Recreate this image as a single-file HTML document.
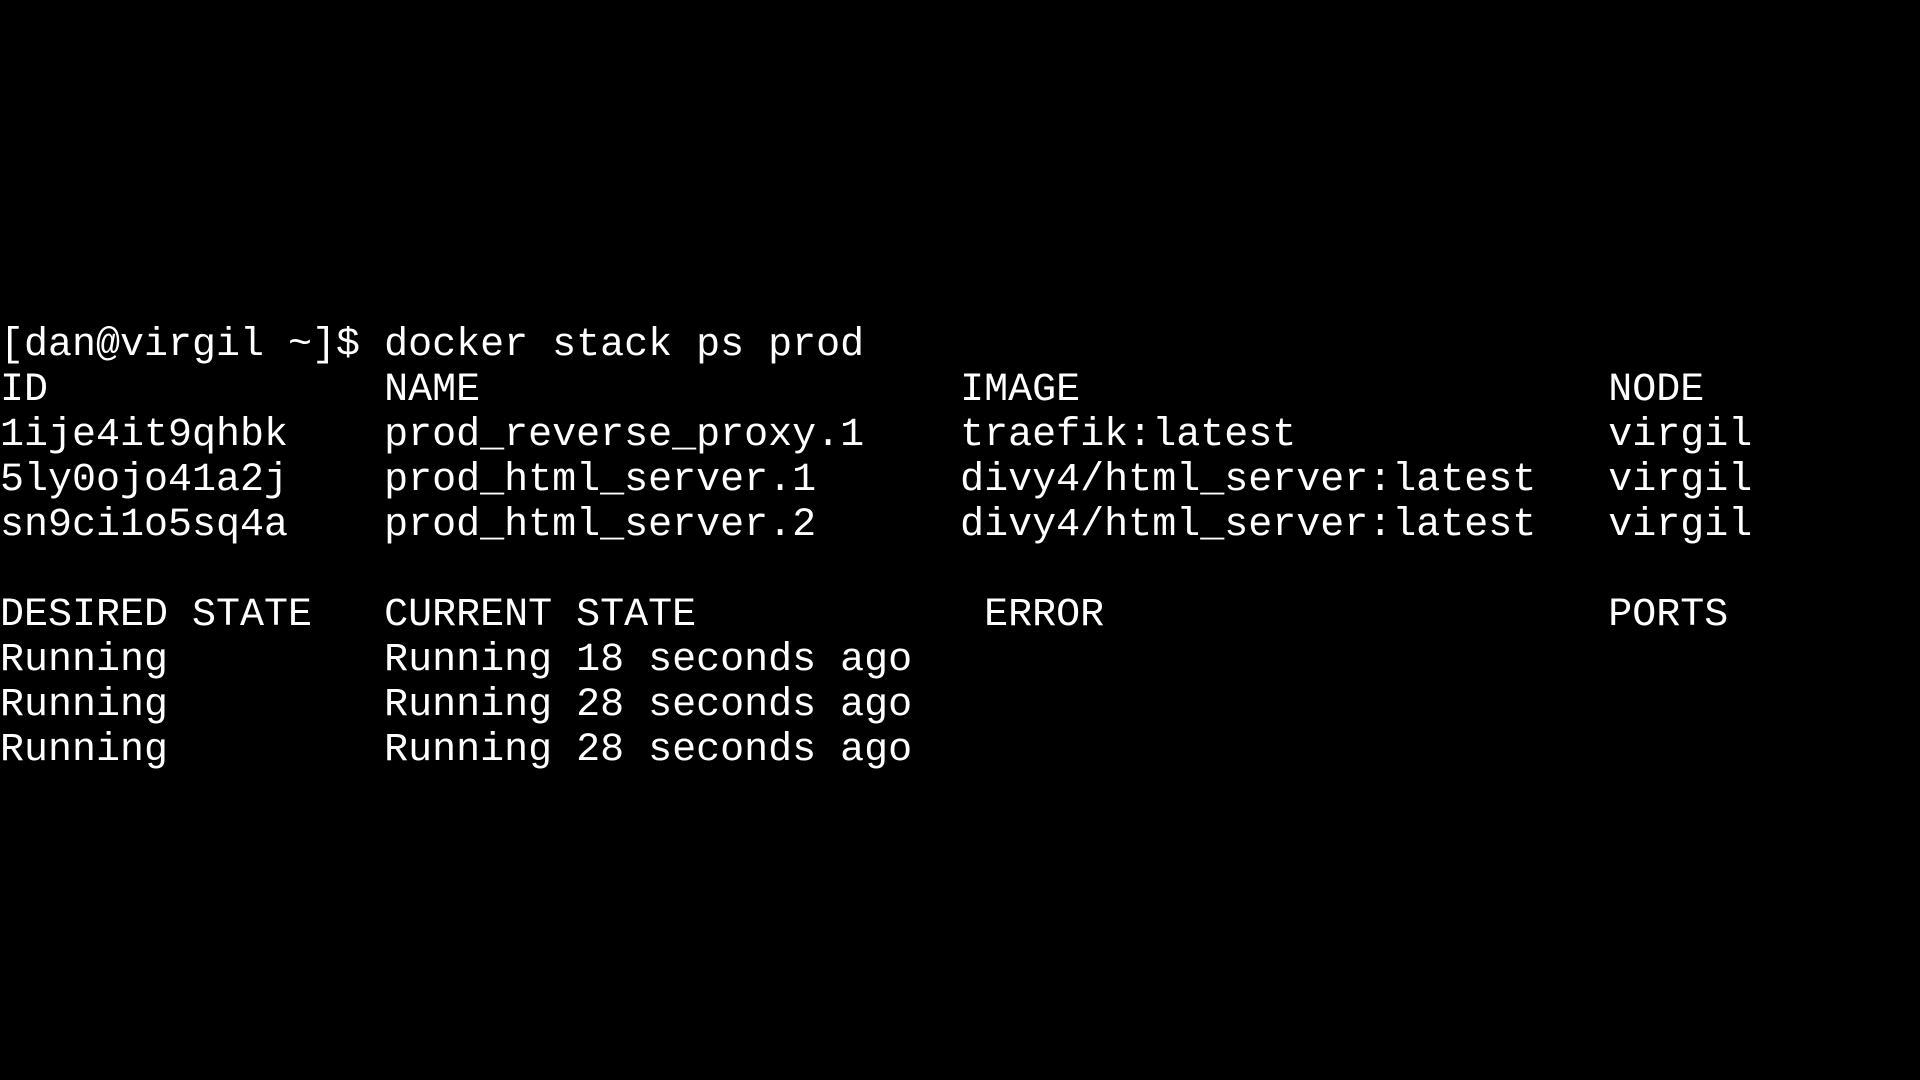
<!DOCTYPE html>
<html><head><meta charset="utf-8"><style>
html,body{margin:0;padding:0;background:#000;width:1920px;height:1080px;overflow:hidden}
pre{position:absolute;left:0;top:323px;margin:0;color:#fff;font-family:"Liberation Mono",monospace;font-size:40px;line-height:45px;white-space:pre}
</style></head><body>
<pre>[dan@virgil ~]$ docker stack ps prod
ID              NAME                    IMAGE                      NODE
1ije4it9qhbk    prod_reverse_proxy.1    traefik:latest             virgil
5ly0ojo41a2j    prod_html_server.1      divy4/html_server:latest   virgil
sn9ci1o5sq4a    prod_html_server.2      divy4/html_server:latest   virgil

DESIRED STATE   CURRENT STATE            ERROR                     PORTS
Running         Running 18 seconds ago
Running         Running 28 seconds ago
Running         Running 28 seconds ago
</pre>
</body></html>
